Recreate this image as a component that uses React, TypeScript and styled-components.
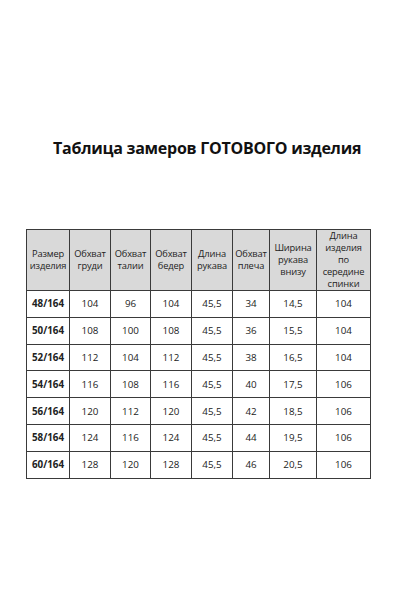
import React from "react";
import styled, { createGlobalStyle } from "styled-components";

const Global = createGlobalStyle`
  html, body { margin: 0; padding: 0; background: #fff; }
  body { width: 400px; height: 600px; overflow: hidden; }
`;

const Page = styled.div`
  width: 400px;
  height: 600px;
  background: #fff;
  display: flex;
  flex-direction: column;
  align-items: flex-start;
  padding-top: 137px;
  box-sizing: border-box;
  font-family: "Open Sans", "Liberation Sans", sans-serif;
  color: #111;
`;

const Title = styled.h1`
  margin: 0 0 0 53px;
  font-size: 16px;
  font-weight: 700;
  line-height: 22px;
  letter-spacing: -0.25px;
  white-space: nowrap;
`;

const Table = styled.table`
  margin: 70px 0 0 26px;
  border-collapse: collapse;
  table-layout: fixed;
  width: 344px;
`;

const HeadCell = styled.th`
  background: #d9d9d9;
  border: 1px solid #3a3a3a;
  font-weight: 400;
  font-size: 9.3px;
  line-height: 12px;
  letter-spacing: -0.15px;
  color: #222;
  height: 59px;
  padding: 0;
  text-align: center;
  vertical-align: middle;
`;

const Cell = styled.td<{ $bold?: boolean }>`
  border: 1px solid #3a3a3a;
  font-size: 9.8px;
  font-weight: ${(p) => (p.$bold ? 700 : 400)};
  color: #222;
  height: 25.8px;
  padding: 0;
  text-align: center;
  vertical-align: middle;
`;

const widths = [43, 41, 40, 41, 41, 37, 47, 54];

const headers = [
  ["Размер", "изделия"],
  ["Обхват", "груди"],
  ["Обхват", "талии"],
  ["Обхват", "бедер"],
  ["Длина", "рукава"],
  ["Обхват", "плеча"],
  ["Ширина", "рукава", "внизу"],
  ["Длина", "изделия", "по", "середине", "спинки"],
];

const rows = [
  ["48/164", "104", "96", "104", "45,5", "34", "14,5", "104"],
  ["50/164", "108", "100", "108", "45,5", "36", "15,5", "104"],
  ["52/164", "112", "104", "112", "45,5", "38", "16,5", "104"],
  ["54/164", "116", "108", "116", "45,5", "40", "17,5", "106"],
  ["56/164", "120", "112", "120", "45,5", "42", "18,5", "106"],
  ["58/164", "124", "116", "124", "45,5", "44", "19,5", "106"],
  ["60/164", "128", "120", "128", "45,5", "46", "20,5", "106"],
];

export default function App() {
  return (
    <>
      <Global />
      <Page>
        <Title>Таблица замеров ГОТОВОГО изделия</Title>
        <Table>
          <colgroup>
            {widths.map((w, i) => (
              <col key={i} style={{ width: w }} />
            ))}
          </colgroup>
          <thead>
            <tr>
              {headers.map((h, i) => (
                <HeadCell key={i}>
                  {h.map((line, j) => (
                    <React.Fragment key={j}>
                      {line}
                      {j < h.length - 1 && <br />}
                    </React.Fragment>
                  ))}
                </HeadCell>
              ))}
            </tr>
          </thead>
          <tbody>
            {rows.map((r, i) => (
              <tr key={i}>
                {r.map((v, j) => (
                  <Cell key={j} $bold={j === 0}>
                    {v}
                  </Cell>
                ))}
              </tr>
            ))}
          </tbody>
        </Table>
      </Page>
    </>
  );
}
